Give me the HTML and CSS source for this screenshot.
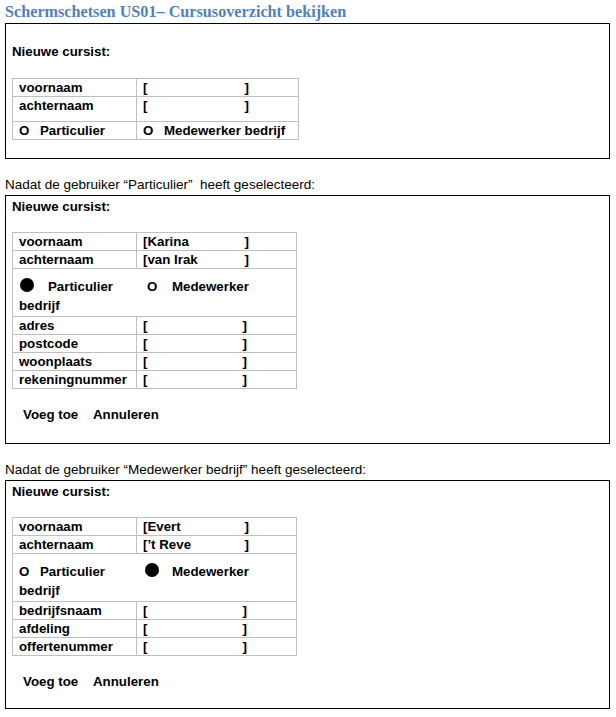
FILE: index.html
```html
<!DOCTYPE html>
<html lang="nl">
<head>
<meta charset="utf-8">
<title>Schermschetsen US01</title>
<link rel="stylesheet" href="styles.css">
</head>
<body>
<h1 class="title">Schermschetsen US01– Cursusoverzicht bekijken</h1>

<section class="box box-empty">
  <p class="heading">Nieuwe cursist:</p>
  <table class="form form-wide">
    <colgroup><col class="col-label"><col></colgroup>
    <tr><td>voornaam</td><td><span class="field"><span>[</span><span>]</span></span></td></tr>
    <tr class="row-tall"><td>achternaam</td><td><span class="field"><span>[</span><span>]</span></span></td></tr>
    <tr><td><span class="o">O</span>Particulier</td><td><span class="o">O</span>Medewerker bedrijf</td></tr>
  </table>
</section>

<p class="caption">Nadat de gebruiker “Particulier”&nbsp; heeft geselecteerd:</p>
<section class="box box-particulier">
  <p class="heading">Nieuwe cursist:</p>
  <table class="form">
    <colgroup><col class="col-label"><col></colgroup>
    <tr><td>voornaam</td><td><span class="field"><span>[Karina</span><span>]</span></span></td></tr>
    <tr><td>achternaam</td><td><span class="field"><span>[van Irak</span><span>]</span></span></td></tr>
    <tr><td colspan="2" class="radio-cell">
      <div class="radio-line"><span class="slot slot-dot-first"><span class="dot"></span></span><span class="slot slot-part-wide">Particulier</span><span class="slot slot-o-wide">O</span>Medewerker</div>
      <div>bedrijf</div>
    </td></tr>
    <tr><td>adres</td><td><span class="field field-short"><span>[</span><span>]</span></span></td></tr>
    <tr><td>postcode</td><td><span class="field field-short"><span>[</span><span>]</span></span></td></tr>
    <tr><td>woonplaats</td><td><span class="field field-short"><span>[</span><span>]</span></span></td></tr>
    <tr><td>rekeningnummer</td><td><span class="field field-short"><span>[</span><span>]</span></span></td></tr>
  </table>
  <div class="actions"><span class="action-first">Voeg toe</span><span>Annuleren</span></div>
</section>

<p class="caption">Nadat de gebruiker “Medewerker bedrijf” heeft geselecteerd:</p>
<section class="box box-medewerker">
  <p class="heading">Nieuwe cursist:</p>
  <table class="form">
    <colgroup><col class="col-label"><col></colgroup>
    <tr><td>voornaam</td><td><span class="field"><span>[Evert</span><span>]</span></span></td></tr>
    <tr><td>achternaam</td><td><span class="field"><span>[’t Reve</span><span>]</span></span></td></tr>
    <tr><td colspan="2" class="radio-cell">
      <div class="radio-line"><span class="slot slot-o">O</span><span class="slot slot-part">Particulier</span><span class="slot slot-dot"><span class="dot"></span></span>Medewerker</div>
      <div>bedrijf</div>
    </td></tr>
    <tr><td>bedrijfsnaam</td><td><span class="field field-short"><span>[</span><span>]</span></span></td></tr>
    <tr><td>afdeling</td><td><span class="field field-short"><span>[</span><span>]</span></span></td></tr>
    <tr><td>offertenummer</td><td><span class="field field-short"><span>[</span><span>]</span></span></td></tr>
  </table>
  <div class="actions"><span class="action-first">Voeg toe</span><span>Annuleren</span></div>
</section>
</body>
</html>
```

FILE: styles.css
```css
* {
  box-sizing: border-box;
}

body {
  margin: 0;
  background: #ffffff;
  color: #000000;
  font-family: "Liberation Sans", Arial, sans-serif;
  font-size: 13.3px;
}

.title {
  margin: 0;
  height: 23px;
  padding: 2px 0 0 5px;
  font-family: "Liberation Serif", "Times New Roman", serif;
  font-weight: bold;
  font-size: 16.2px;
  line-height: 20px;
  color: #4f81bd;
}

.caption {
  margin: 17px 0 1px 5px;
  font-size: 13.5px;
  line-height: 18px;
}

.box {
  margin-left: 5px;
  width: 605px;
  border: 1px solid #000000;
  padding: 2px 0 0 6px;
}

.box-empty {
  height: 136px;
  padding-top: 19px;
}

.box-particulier {
  height: 249px;
}

.box-medewerker {
  height: 229px;
}

.heading {
  margin: 0 0 16px;
  font-weight: bold;
  line-height: 18px;
}

.box-empty .heading {
  margin-bottom: 17px;
}

.form {
  border-collapse: collapse;
  table-layout: fixed;
  width: 285px;
  font-weight: bold;
}

.form-wide {
  width: 287px;
}

.col-label {
  width: 124px;
}

.form td {
  border: 1px solid #bfbfbf;
  padding: 0 6px;
  line-height: 17px;
  vertical-align: top;
  white-space: nowrap;
}

.form .row-tall td {
  padding-bottom: 7px;
}

.field {
  display: flex;
  justify-content: space-between;
  width: 106px;
}

.field-short {
  width: 104px;
}

.o {
  display: inline-block;
  width: 21px;
}

.form .radio-cell {
  padding: 8px 6px 1px;
  line-height: 19px;
}

.slot {
  display: inline-block;
}

.slot-dot-first {
  width: 29px;
  padding-left: 1px;
}

.slot-part-wide {
  width: 99px;
}

.slot-o-wide {
  width: 25px;
}

.slot-o {
  width: 21px;
}

.slot-part {
  width: 105px;
}

.slot-dot {
  width: 27px;
}

.dot {
  display: inline-block;
  width: 14px;
  height: 14px;
  border-radius: 50%;
  background: #000000;
  vertical-align: -1px;
}

.actions {
  display: flex;
  margin-top: 17px;
  padding-left: 11px;
  font-weight: bold;
  line-height: 18px;
}

.action-first {
  width: 70px;
}
```
